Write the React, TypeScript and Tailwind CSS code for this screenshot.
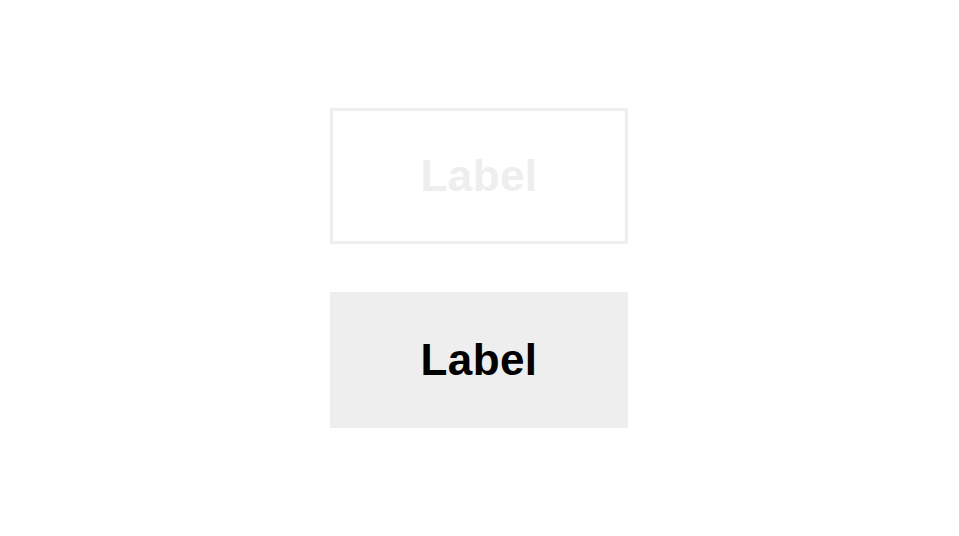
import React from "react";

export default function App() {
  return (
    <div className="flex h-[536px] w-full flex-col items-center justify-center gap-[48px] bg-white pr-[1px]" style={{ fontFamily: '"Liberation Sans", Arial, sans-serif' }}>
      <div className="flex h-[136px] w-[298px] items-center justify-center border-[3px] border-[#eeeeee] text-[44px] font-bold leading-none tracking-[0.4px] text-[#eeeeee]">
        Label
      </div>
      <div className="flex h-[136px] w-[298px] items-center justify-center bg-[#eeeeee] text-[44px] font-bold leading-none tracking-[0.4px] text-black">
        Label
      </div>
    </div>
  );
}
